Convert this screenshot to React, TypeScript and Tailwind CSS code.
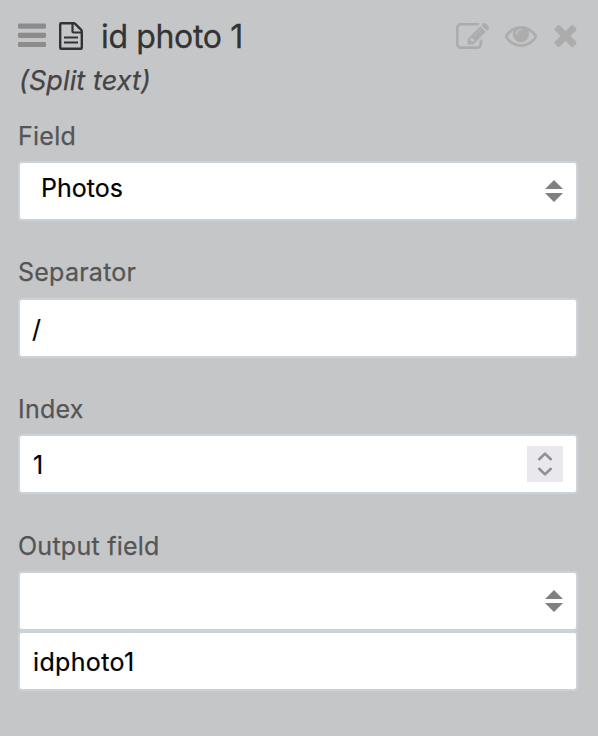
import type { ReactNode } from "react";

const box =
  "flex h-[60px] w-full items-center rounded-[4px] border-2 border-[#cbd2da] bg-white text-[25px] text-black";

function Label({ children }: { children: ReactNode }) {
  return (
    <div className="mb-[10px] h-[30px] text-[25px] leading-[30px] tracking-[0.25px] text-[#555] [-webkit-text-stroke:0.25px_#555]">
      {children}
    </div>
  );
}

function SelectArrows() {
  return (
    <svg className="mr-[13px] ml-auto" width="18" height="22" viewBox="0 0 18 22" fill="#808080">
      <path d="M9 0L18 9H0ZM9 22L0 13H18Z" />
    </svg>
  );
}

function Stepper() {
  return (
    <div className="mr-[13px] ml-auto flex h-[36px] w-[36px] items-center justify-center bg-[#e9e8ed]">
      <svg width="16" height="26" viewBox="0 0 16 26" fill="none" stroke="#8f8f9d" strokeWidth="2.6" strokeLinecap="round" strokeLinejoin="round">
        <path d="M2.200 8.200L8 2.600L13.800 8.200M2.200 17.800L8 23.400L13.800 17.800" />
      </svg>
    </div>
  );
}

function BarsIcon() {
  return (
    <svg className="mb-[2px]" width="29" height="25" viewBox="0 0 29 25" fill="#8c8c8c">
      <rect x="0" y="0.500" width="28" height="5.200" rx="1.300" />
      <rect x="0" y="9.700" width="28" height="5.200" rx="1.300" />
      <rect x="0" y="18.900" width="28" height="5.200" rx="1.300" />
    </svg>
  );
}

function FileIcon() {
  return (
    <svg className="ml-[12px]" width="24" height="28" viewBox="0 0 24 28" fill="none" stroke="#333">
      <path d="M2.200 1.200H14.500Q15.500 1.200 16.200 1.900L22 7.700Q22.800 8.500 22.800 9.500V25.800Q22.800 26.800 21.800 26.800H2.200Q1.200 26.800 1.200 25.800V2.200Q1.200 1.200 2.200 1.200Z" strokeWidth="2.400" />
      <path d="M13.500 1.500V9.500Q13.500 10.500 14.500 10.500H22.500" strokeWidth="2.200" />
      <path d="M5 15.500H19M5 20.500H19" strokeWidth="2.200" />
    </svg>
  );
}

function EditIcon() {
  return (
    <svg width="33" height="26" viewBox="0 136 1784 1400" fill="#acacac" stroke="#acacac" strokeWidth="24">
      <path d="M888 1184l116-116-152-152-116 116v56h96v96h56zm440-720q-16-16-33 1l-350 350q-17 17-1 33t33-1l350-350q17-17 1-33zm80 594v190q0 119-84.500 203.500t-203.500 84.500h-832q-119 0-203.500-84.500t-84.500-203.500v-832q0-119 84.500-203.500t203.500-84.500h832q63 0 117 25 15 7 18 23 3 17-9 29l-49 49q-14 14-32 8-23-6-45-6h-832q-66 0-113 47t-47 113v832q0 66 47 113t113 47h832q66 0 113-47t47-113v-126q0-13 9-22l64-64q15-15 35-7t20 29zm-96-738l288 288-672 672h-288v-288zm444 132l-92 92-288-288 92-92q28-28 68-28t68 28l152 152q28 28 28 68t-28 68z" />
    </svg>
  );
}

function EyeIcon() {
  return (
    <svg className="mt-[1px] ml-[16px]" width="32" height="21" viewBox="0 384 1792 1152" fill="#acacac" stroke="#acacac" strokeWidth="24">
      <path d="M1664 960q-152-236-381-353 61 104 61 225 0 185-131.500 316.500t-316.500 131.500-316.500-131.500-131.500-316.500q0-121 61-225-229 117-381 353 133 205 333.500 326.500t434.500 121.500 434.500-121.500 333.500-326.500zm-720-384q0-20-14-34t-34-14q-125 0-214.500 89.500t-89.500 214.500q0 20 14 34t34 14 34-14 14-34q0-86 61-147t147-61q20 0 34-14t14-34zm848 384q0 34-20 69-140 230-376.500 368.500t-499.500 138.500-499.500-139-376.500-368q-20-35-20-69t20-69q140-229 376.500-368t499.500-139 499.500 139 376.500 368q20 35 20 69z" />
    </svg>
  );
}

function CloseIcon() {
  return (
    <svg className="mr-[1px] ml-[17px]" width="23" height="22" viewBox="302 366 1188 1188" fill="#acacac">
      <path d="M1490 1322q0 40-28 68l-136 136q-28 28-68 28t-68-28l-294-294-294 294q-28 28-68 28t-68-28l-136-136q-28-28-28-68t28-68l294-294-294-294q-28-28-28-68t28-68l136-136q28-28 68-28t68 28l294 294 294-294q28-28 68-28t68 28l136 136q28 28 28 68t-28 68l-294 294 294 294q28 28 28 68z" />
    </svg>
  );
}

export default function App() {
  return (
    <main className="h-[736px] w-[598px] bg-[#c5c6c8] pt-[16px] pr-[20px] pl-[18px] font-['Inter',sans-serif]">
      <header className="flex h-[40px] items-center">
        <BarsIcon />
        <FileIcon />
        <h1 className="ml-[18px] pt-[2px] text-[32px] leading-[40px] tracking-[-0.35px] text-[#333] [-webkit-text-stroke:0.3px_#333]">id photo 1</h1>
        <div className="ml-auto flex items-center">
          <EditIcon />
          <EyeIcon />
          <CloseIcon />
        </div>
      </header>
      <p className="mt-[9px] h-[32px] pl-px text-[27px] leading-[32px] tracking-[0.1px] text-[#444] italic [-webkit-text-stroke:0.25px_#444]">(Split text)</p>
      <section className="mt-[24px] h-[136px]">
        <Label>Field</Label>
        <div className={box}>
          <span className="ml-[21px] pb-[4px] [-webkit-text-stroke:0.2px_#000]">Photos</span>
          <SelectArrows />
        </div>
      </section>
      <section className="h-[137px] [&>div:first-child]:mb-[11px]">
        <Label>Separator</Label>
        <div className={box}>
          <span className="ml-[12px] pt-[3px] [-webkit-text-stroke:0.2px_#000]">/</span>
        </div>
      </section>
      <section className="h-[137px]">
        <Label>Index</Label>
        <div className={box}>
          <span className="ml-[13px] pt-[3px] [-webkit-text-stroke:0.2px_#000]">1</span>
          <Stepper />
        </div>
      </section>
      <section>
        <Label>Output field</Label>
        <div className={box}>
          <SelectArrows />
        </div>
        <div className={box}>
          <span className="ml-[13px] pt-[3px] tracking-[0.35px] [-webkit-text-stroke:0.2px_#000]">idphoto1</span>
        </div>
      </section>
    </main>
  );
}
